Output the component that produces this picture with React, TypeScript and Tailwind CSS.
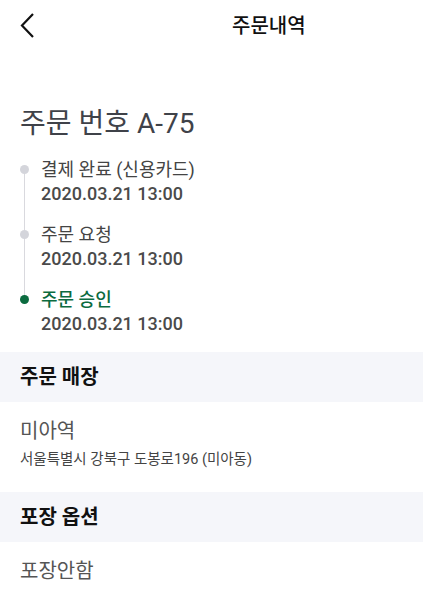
import React from "react";

const font = { fontFamily: 'Roboto, "Noto Sans CJK KR", "Noto Sans", sans-serif' };

function Step({ label, date, active, last }: { label: string; date: string; active?: boolean; last?: boolean }) {
  return (
    <div className="relative flex h-[65px]">
      {!last && <div className="absolute left-[3.5px] top-[6px] h-[65px] w-[1px] bg-[#d9d9de]" />}
      <div className={`relative mt-[2px] h-[9px] w-[9px] shrink-0 rounded-full ${active ? "bg-[#0b6b3f]" : "bg-[#d4d5db]"}`} />
      <div className="ml-[12px] flex flex-col">
        <span className={`-mt-[5px] text-[18px] leading-[24px] ${active ? "text-[#0b6b3f] font-medium" : "text-[#444]"}`}>{label}</span>
        <span className="text-[18px] leading-[23px] font-medium text-[#4a4a4a]">{date}</span>
      </div>
    </div>
  );
}

export default function App() {
  return (
    <div className="w-[423px] h-[594px] bg-white overflow-hidden" style={font}>
      <div className="relative flex h-[52px] items-center">
        <svg className="absolute left-[18px] top-[12px]" width="20" height="28" viewBox="0 0 20 28" fill="none">
          <path d="M15 2 L4 13.5 L15 25" stroke="#111" strokeWidth="2.2" />
        </svg>
        <div className="absolute left-[232px] top-[12px] text-[20px] leading-[28px] font-medium text-[#111]">주문내역</div>
      </div>
      <div className="px-[20px] pt-[53px]">
        <div className="text-[28px] leading-[38px] font-normal text-[#3f4249]">주문 번호 A-75</div>
        <div className="mt-[20px]">
          <Step label="결제 완료 (신용카드)" date="2020.03.21 13:00" />
          <Step label="주문 요청" date="2020.03.21 13:00" />
          <Step label="주문 승인" date="2020.03.21 13:00" active last />
        </div>
      </div>
      <div className="mt-[-6px] flex h-[50px] items-center bg-[#f5f6fa] px-[20px] text-[20px] font-bold text-[#111]">주문 매장</div>
      <div className="px-[20px] pt-[14px] pb-[22px]">
        <div className="text-[20px] leading-[30px] text-[#555]">미아역</div>
        <div className="mt-[4px] text-[14.5px] leading-[20px] text-[#444]">서울특별시 강북구 도봉로196 (미아동)</div>
      </div>
      <div className="flex h-[50px] items-center bg-[#f5f6fa] px-[20px] text-[20px] font-bold text-[#111]">포장 옵션</div>
      <div className="px-[20px] pt-[14px]">
        <div className="text-[20px] leading-[30px] text-[#555]">포장안함</div>
      </div>
    </div>
  );
}
